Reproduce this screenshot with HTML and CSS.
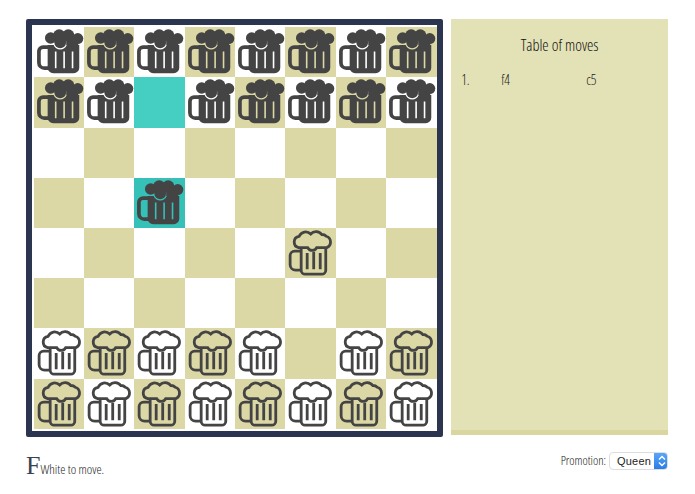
FILE: index.html
```html
<!DOCTYPE html>
<html lang="en">
<head>
    <meta charset="UTF-8">
    <title>Beer chess</title>
    <link rel="stylesheet" href="styles.css">
</head>
<body>
    <svg class="defs" width="0" height="0">
        <symbol id="mugDark" viewBox="0 0 50 50">
            <path class="handle" d="M15 20H9a4.200 4.200 0 0 0-4.200 4.200V35.500a5.500 5.500 0 0 0 5.500 5.500H15"/>
            <path fill-rule="evenodd" d="M13.500 18H19.500A7 7 0 0 0 32.500 18H45V40.500a5.500 5.500 0 0 1-5.500 5.500H19a5.500 5.500 0 0 1-5.500-5.500ZM20.700 24.500V41h1.600V24.500ZM29.100 24.500V41h1.600V24.500ZM37.500 24.500V41h1.600V24.500Z"/>
            <circle cx="16.500" cy="11" r="5.700"/>
            <circle cx="25" cy="8.500" r="6.200"/>
            <circle cx="34" cy="8.500" r="6.200"/>
            <circle cx="43.500" cy="11.500" r="5.500"/>
            <circle cx="26" cy="15.200" r="5.900"/>
            <path d="M17 10H44V18H32V12H17Z"/>
        </symbol>
        <symbol id="mugLight" viewBox="0 0 50 50">
            <path class="line" d="M15 23H9.500a4.500 4.500 0 0 0-4.500 4.500V36.500a5.500 5.500 0 0 0 5.500 5.500H15"/>
            <path class="line" d="M16 20V42a4 4 0 0 0 4 4H36.500a4 4 0 0 0 4-4V20"/>
            <path class="line slit" d="M22 25V41M28.500 24V41M35 25V41"/>
            <path class="line" d="M13.500 19.500A5.700 5.700 0 0 1 14 8.300A7 7 0 0 1 25.500 6A7 7 0 0 1 36.500 6.500A6 6 0 0 1 41 8.200A6 6 0 0 1 41.500 19.500H31.500A5 5 0 0 1 22.500 19.500Z"/>
        </symbol>
    </svg>

    <div class="game">
        <div class="board">
            <div class="sq"><svg><use href="#mugDark"/></svg></div>
            <div class="sq dark"><svg><use href="#mugDark"/></svg></div>
            <div class="sq"><svg><use href="#mugDark"/></svg></div>
            <div class="sq dark"><svg><use href="#mugDark"/></svg></div>
            <div class="sq"><svg><use href="#mugDark"/></svg></div>
            <div class="sq dark"><svg><use href="#mugDark"/></svg></div>
            <div class="sq"><svg><use href="#mugDark"/></svg></div>
            <div class="sq dark"><svg><use href="#mugDark"/></svg></div>

            <div class="sq dark"><svg><use href="#mugDark"/></svg></div>
            <div class="sq"><svg><use href="#mugDark"/></svg></div>
            <div class="sq from"></div>
            <div class="sq"><svg><use href="#mugDark"/></svg></div>
            <div class="sq dark"><svg><use href="#mugDark"/></svg></div>
            <div class="sq"><svg><use href="#mugDark"/></svg></div>
            <div class="sq dark"><svg><use href="#mugDark"/></svg></div>
            <div class="sq"><svg><use href="#mugDark"/></svg></div>

            <div class="sq"></div>
            <div class="sq dark"></div>
            <div class="sq"></div>
            <div class="sq dark"></div>
            <div class="sq"></div>
            <div class="sq dark"></div>
            <div class="sq"></div>
            <div class="sq dark"></div>

            <div class="sq dark"></div>
            <div class="sq"></div>
            <div class="sq to"><svg><use href="#mugDark"/></svg></div>
            <div class="sq"></div>
            <div class="sq dark"></div>
            <div class="sq"></div>
            <div class="sq dark"></div>
            <div class="sq"></div>

            <div class="sq"></div>
            <div class="sq dark"></div>
            <div class="sq"></div>
            <div class="sq dark"></div>
            <div class="sq"></div>
            <div class="sq dark"><svg><use href="#mugLight"/></svg></div>
            <div class="sq"></div>
            <div class="sq dark"></div>

            <div class="sq dark"></div>
            <div class="sq"></div>
            <div class="sq dark"></div>
            <div class="sq"></div>
            <div class="sq dark"></div>
            <div class="sq"></div>
            <div class="sq dark"></div>
            <div class="sq"></div>

            <div class="sq"><svg><use href="#mugLight"/></svg></div>
            <div class="sq dark"><svg><use href="#mugLight"/></svg></div>
            <div class="sq"><svg><use href="#mugLight"/></svg></div>
            <div class="sq dark"><svg><use href="#mugLight"/></svg></div>
            <div class="sq"><svg><use href="#mugLight"/></svg></div>
            <div class="sq dark"></div>
            <div class="sq"><svg><use href="#mugLight"/></svg></div>
            <div class="sq dark"><svg><use href="#mugLight"/></svg></div>

            <div class="sq dark"><svg><use href="#mugLight"/></svg></div>
            <div class="sq"><svg><use href="#mugLight"/></svg></div>
            <div class="sq dark"><svg><use href="#mugLight"/></svg></div>
            <div class="sq"><svg><use href="#mugLight"/></svg></div>
            <div class="sq dark"><svg><use href="#mugLight"/></svg></div>
            <div class="sq"><svg><use href="#mugLight"/></svg></div>
            <div class="sq dark"><svg><use href="#mugLight"/></svg></div>
            <div class="sq"><svg><use href="#mugLight"/></svg></div>
        </div>

        <div class="moves">
            <h2>Table of moves</h2>
            <div class="move-row">
                <span class="num">1.</span>
                <span class="white-move">f4</span>
                <span class="black-move">c5</span>
            </div>
        </div>
    </div>

    <div class="status">
        <p class="turn"><span class="dropcap">F</span>White to move.</p>
        <div class="promotion">
            <label for="promo">Promotion:</label>
            <div class="select-box">
                <select id="promo">
                    <option>Queen</option>
                    <option>Rook</option>
                    <option>Bishop</option>
                    <option>Knight</option>
                </select>
                <svg class="chevrons" width="8" height="12" viewBox="0 0 8 12">
                    <path d="M1 4.500L4 1.500L7 4.500M1 7.500L4 10.500L7 7.500"/>
                </svg>
            </div>
        </div>
    </div>
</body>
</html>
```

FILE: styles.css
```css
body {
    margin: 0;
    background: #fff;
    color: #222;
    font-family: "Open Sans", sans-serif;
    font-stretch: 75%;
    font-weight: 300;
}
.defs {
    position: absolute;
}
.game {
    display: flex;
    align-items: flex-start;
    gap: 8px;
    padding: 19px 27px 0 26px;
}
.board {
    display: grid;
    grid-template-columns: repeat(8, 50.4px);
    grid-template-rows: repeat(8, 50.2px);
    padding: 2.2px .5px 2px 1.5px;
    border: 6px solid #2c3550;
    border-radius: 2px;
    background: #fff;
}
.sq {
    display: flex;
}
.sq svg {
    width: 100%;
    height: 100%;
    fill: #444;
    stroke: none;
}
.sq.dark {
    background: #dcd8a5;
}
.sq.from {
    background: #45cfc3;
}
.sq.to {
    background: #35c0b8;
}
.handle {
    fill: none;
    stroke: #444;
    stroke-width: 3.7;
}
.line {
    fill: none;
    stroke: #444;
    stroke-width: 2.8;
}
.moves {
    flex: 1;
    height: 411px;
    background: #e3e1b6;
    border-bottom: 5px solid #d9d69f;
    font-size: 14px;
}
.moves h2 {
    margin: 15px 0 14px;
    font-size: 16px;
    font-weight: 300;
    text-align: center;
    color: #111;
}
.move-row {
    display: flex;
    padding-left: 10px;
}
.num {
    width: 40px;
}
.white-move {
    width: 85px;
}
.status {
    display: flex;
    justify-content: space-between;
    padding: 14px 27px 0 26px;
}
.turn {
    margin: 0;
    font-size: 13px;
}
.dropcap {
    font-family: "Liberation Serif", serif;
    font-stretch: normal;
    font-weight: 400;
    font-size: 26px;
    color: #3a4250;
}
.promotion {
    display: flex;
    align-items: center;
    gap: 3px;
    height: 18px;
    margin-top: 1px;
    font-size: 12.500px;
}
.select-box {
    position: relative;
    width: 59px;
    height: 18px;
}
select {
    appearance: none;
    width: 100%;
    height: 100%;
    padding: 0 0 0 7px;
    border: 1px solid #ddd;
    border-radius: 4px;
    background: linear-gradient(#5aa5f7, #2a7de8) right / 13px 100% no-repeat #fff;
    color: #222;
    font-family: "Liberation Sans", sans-serif;
    font-size: 11px;
    font-weight: 400;
    font-stretch: normal;
    letter-spacing: .2px;
}
.chevrons {
    position: absolute;
    top: 3px;
    right: 2px;
    fill: none;
    stroke: #fff;
    stroke-width: 1.5;
}
```
